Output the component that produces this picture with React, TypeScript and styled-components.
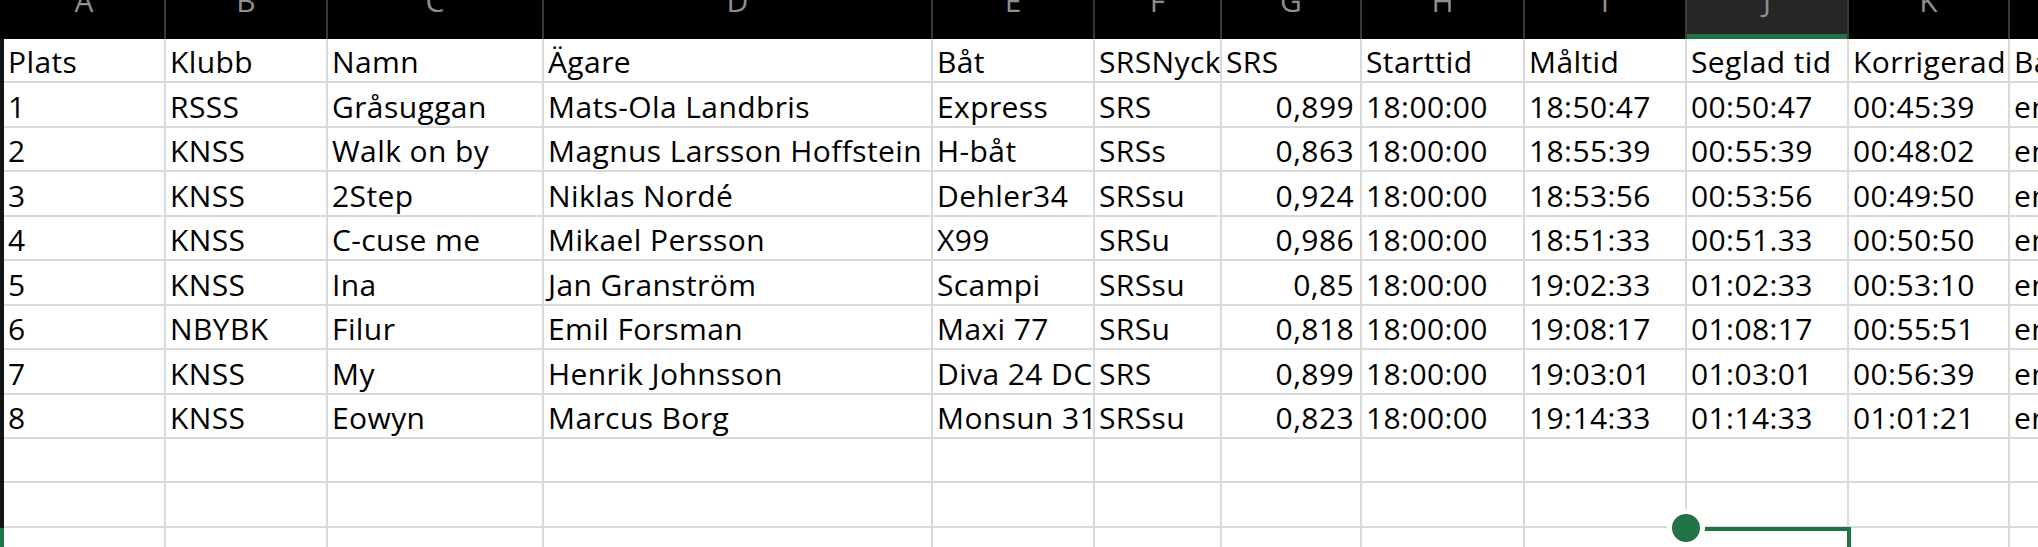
import styled, { createGlobalStyle, css } from "styled-components";

const GlobalStyle = createGlobalStyle`
  html,
  body {
    margin: 0;
    padding: 0;
    background: #ffffff;
    overflow: hidden;
  }
`;

const COLUMNS = "4px 162px 162px 216px 389px 162px 127px 140px 163px 162px 162px 161px 200px";
const GRID_COLOR = "#dadada";
const EXCEL_GREEN = "#217346";
const ROW_HEIGHT = 44.44;

const LETTERS = ["A", "B", "C", "D", "E", "F", "G", "H", "I", "J", "K", "L"];
const ACTIVE_COLUMN = "J";

type Align = "left" | "right";

const HEADINGS = [
  "Plats", "Klubb", "Namn", "Ägare", "Båt", "SRSNyckeltal",
  "SRS", "Starttid", "Måltid", "Seglad tid", "Korrigerad", "Bana",
];

const RESULTS = [
  ["1", "RSSS", "Gråsuggan", "Mats-Ola Landbris", "Express", "SRS", "0,899", "18:00:00", "18:50:47", "00:50:47", "00:45:39", "en"],
  ["2", "KNSS", "Walk on by", "Magnus Larsson Hoffstein", "H-båt", "SRSs", "0,863", "18:00:00", "18:55:39", "00:55:39", "00:48:02", "en"],
  ["3", "KNSS", "2Step", "Niklas Nordé", "Dehler34", "SRSsu", "0,924", "18:00:00", "18:53:56", "00:53:56", "00:49:50", "en"],
  ["4", "KNSS", "C-cuse me", "Mikael Persson", "X99", "SRSu", "0,986", "18:00:00", "18:51:33", "00:51.33", "00:50:50", "en"],
  ["5", "KNSS", "Ina", "Jan Granström", "Scampi", "SRSsu", "0,85", "18:00:00", "19:02:33", "01:02:33", "00:53:10", "en"],
  ["6", "NBYBK", "Filur", "Emil Forsman", "Maxi 77", "SRSu", "0,818", "18:00:00", "19:08:17", "01:08:17", "00:55:51", "en"],
  ["7", "KNSS", "My", "Henrik Johnsson", "Diva 24 DC", "SRS", "0,899", "18:00:00", "19:03:01", "01:03:01", "00:56:39", "en"],
  ["8", "KNSS", "Eowyn", "Marcus Borg", "Monsun 31", "SRSsu", "0,823", "18:00:00", "19:14:33", "01:14:33", "01:01:21", "en"],
];

// the SRS factor column holds real numbers, which Excel puts on the right
const NUMBER_COLUMN = 6;
const EMPTY_ROWS = 3;
const SELECTED_EMPTY_ROW = 2;

const Sheet = styled.div`
  position: relative;
  width: 2038px;
  height: 547px;
  overflow: hidden;
  font-family: "Open Sans", "Lato", "Liberation Sans", sans-serif;
  color: #000000;
`;

const ColumnHeader = styled.div`
  display: grid;
  grid-template-columns: ${COLUMNS};
  height: 39px;
  background: #000000;
`;

const ColumnLetter = styled.div<{ $active?: boolean }>`
  display: flex;
  justify-content: center;
  overflow: hidden;
  border-right: 2px solid #3a3a3a;
  font-size: 30px;
  line-height: 1;
  color: #8f8f8f;

  span {
    margin-top: -14px;
  }

  ${({ $active }) =>
    $active &&
    css`
      background: #262626;
      box-shadow: inset 0 -5px 0 ${EXCEL_GREEN};
    `}
`;

const Row = styled.div`
  display: grid;
  grid-template-columns: ${COLUMNS};
  height: ${ROW_HEIGHT}px;
`;

const RowHead = styled.div<{ $selected?: boolean }>`
  background: ${({ $selected }) => ($selected ? EXCEL_GREEN : "#141414")};
`;

const Cell = styled.div<{ $align: Align }>`
  display: flex;
  align-items: flex-end;
  justify-content: ${({ $align }) => ($align === "right" ? "flex-end" : "flex-start")};
  box-sizing: border-box;
  padding: 0 6px 4px 4px;
  border-right: 2px solid ${GRID_COLOR};
  border-bottom: 2px solid ${GRID_COLOR};
  overflow: hidden;
  white-space: nowrap;
  font-size: 30px;
  letter-spacing: 0.4px;
  line-height: 1;
`;

const FillHandle = styled.div`
  position: absolute;
  left: 1667px;
  top: 509px;
  width: 28px;
  height: 28px;
  border: 5px solid #ffffff;
  border-radius: 50%;
  background: ${EXCEL_GREEN};
`;

const SelectionTop = styled.div`
  position: absolute;
  left: 1704px;
  top: 527px;
  width: 147px;
  height: 4px;
  background: ${EXCEL_GREEN};
`;

const SelectionRight = styled.div`
  position: absolute;
  left: 1847px;
  top: 527px;
  width: 4px;
  height: 40px;
  background: ${EXCEL_GREEN};
`;

function SheetRow({
  values,
  heading,
  selected,
}: {
  values: string[];
  heading?: boolean;
  selected?: boolean;
}) {
  return (
    <Row>
      <RowHead $selected={selected} />
      {LETTERS.map((letter, i) => (
        <Cell key={letter} $align={!heading && i === NUMBER_COLUMN ? "right" : "left"}>
          {values[i] ?? ""}
        </Cell>
      ))}
    </Row>
  );
}

export default function App() {
  const empties = Array.from({ length: EMPTY_ROWS }, (_, i) => i);

  return (
    <>
      <GlobalStyle />
      <Sheet>
        <ColumnHeader>
          <div />
          {LETTERS.map((letter) => (
            <ColumnLetter key={letter} $active={letter === ACTIVE_COLUMN}>
              <span>{letter}</span>
            </ColumnLetter>
          ))}
        </ColumnHeader>

        <SheetRow values={HEADINGS} heading />
        {RESULTS.map((row) => (
          <SheetRow key={row[0]} values={row} />
        ))}
        {empties.map((i) => (
          <SheetRow key={`empty-${i}`} values={[]} selected={i === SELECTED_EMPTY_ROW} />
        ))}

        <SelectionTop />
        <SelectionRight />
        <FillHandle />
      </Sheet>
    </>
  );
}
